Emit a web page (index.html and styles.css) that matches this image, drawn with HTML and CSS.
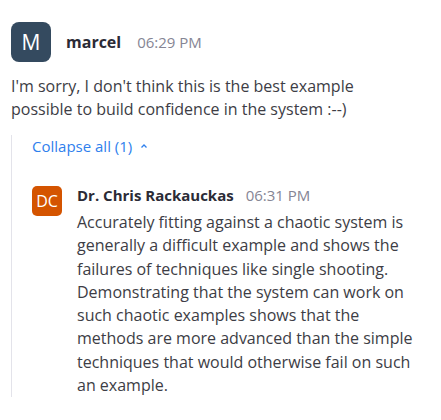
FILE: index.html
```html
<!DOCTYPE html>
<html>
<head>
<meta charset="utf-8">
<link rel="stylesheet" href="styles.css">
</head>
<body>
<div class="post">
  <div class="head">
    <div class="avatar avatar-m">M</div>
    <span class="name">marcel</span>
    <span class="time">06:29 PM</span>
  </div>
  <p class="text">I'm sorry, I don't think this is the best example possible to build confidence in the system :--)</p>
  <div class="thread">
    <div class="collapse">Collapse all (1)
      <svg class="chev" width="10" height="10" viewBox="0 0 10 10"><path d="M2.5 6.5 L5 4 L7.5 6.5" fill="none" stroke="#2f80ed" stroke-width="1.3"/></svg>
    </div>
    <div class="reply">
      <div class="avatar avatar-dc">DC</div>
      <div class="reply-body">
        <div class="reply-head">
          <span class="name name-sm">Dr. Chris Rackauckas</span>
          <span class="time">06:31 PM</span>
        </div>
        <p class="text reply-text">Accurately fitting against a chaotic system is generally a difficult example and shows the failures of techniques like single shooting. Demonstrating that the system can work on such chaotic examples shows that the methods are more advanced than the simple techniques that would otherwise fail on such an example.</p>
      </div>
    </div>
  </div>
</div>
</body>
</html>
```
FILE: styles.css
```css
* { box-sizing: border-box; }
body {
  margin: 0;
  background: #fff;
  font-family: "Open Sans", "Noto Sans", sans-serif;
  color: #3d3d45;
}
.post {
  padding: 22px 23px 0 11px;
}
.head {
  display: flex;
  align-items: center;
}
.avatar {
  flex: none;
  display: flex;
  align-items: center;
  justify-content: center;
  color: #fff;
}
.avatar-m {
  width: 40px;
  height: 40px;
  border-radius: 8px;
  background: #344a5f;
  font-size: 21px;
}
.avatar-dc {
  width: 30px;
  height: 30px;
  border-radius: 5px;
  background: #d45400;
  font-size: 16px;
  margin-top: 1px;
}
.name {
  margin-left: 15px;
  font-weight: 700;
  font-size: 16px;
  color: #2b2b36;
}
.name-sm {
  margin-left: 0;
  font-size: 15px;
}
.time {
  margin-left: 16px;
  font-size: 15px;
  color: #858594;
}
.text {
  margin: 13px 0 0 0;
  font-size: 16px;
  line-height: 22.5px;
  color: #3d3d45;
}
.thread {
  margin-top: 15px;
  border-left: 1px solid #e3e3ea;
  padding: 0 0 0 20px;
}
.collapse {
  display: flex;
  align-items: center;
  font-size: 15px;
  line-height: 22px;
  color: #2f80ed;
}
.chev { margin-left: 7px; }
.reply {
  display: flex;
  margin-top: 28px;
}
.reply-body {
  margin-left: 15px;
}
.reply-head {
  display: flex;
  align-items: baseline;
  line-height: 20px;
}
.reply-head .time { margin-left: 12px; }
.reply-text {
  margin-top: 6px;
  line-height: 23.3px;
}
```
